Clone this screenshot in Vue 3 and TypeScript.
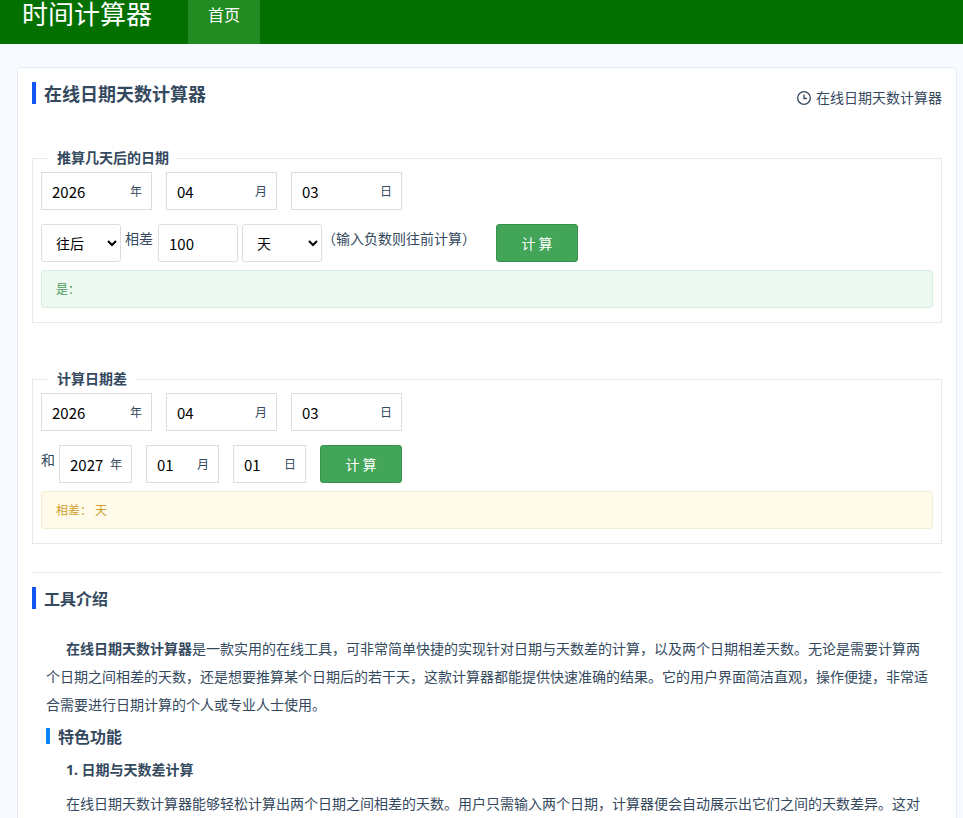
<script setup lang="ts">
import { reactive, ref } from 'vue'

interface DateParts {
  year: string
  month: string
  day: string
}

const DAY_MS = 86400000
const units: { key: keyof DateParts; label: string }[] = [
  { key: 'year', label: '年' },
  { key: 'month', label: '月' },
  { key: 'day', label: '日' },
]

const base = reactive<DateParts>({ year: '2026', month: '04', day: '03' })
const start = reactive<DateParts>({ year: '2026', month: '04', day: '03' })
const end = reactive<DateParts>({ year: '2027', month: '01', day: '01' })
const direction = ref('after')
const amount = ref('100')
const unit = ref('day')
const shifted = ref('')
const difference = ref('')

function toDate(parts: DateParts): Date {
  return new Date(Date.UTC(Number(parts.year), Number(parts.month) - 1, Number(parts.day)))
}

function shiftDate(): void {
  const date = toDate(base)
  const step = Number(amount.value) * (direction.value === 'after' ? 1 : -1)
  if (unit.value === 'day') date.setUTCDate(date.getUTCDate() + step)
  if (unit.value === 'week') date.setUTCDate(date.getUTCDate() + step * 7)
  if (unit.value === 'month') date.setUTCMonth(date.getUTCMonth() + step)
  shifted.value = `${date.getUTCFullYear()}年${date.getUTCMonth() + 1}月${date.getUTCDate()}日`
}

function compareDates(): void {
  const days = Math.round((toDate(end).getTime() - toDate(start).getTime()) / DAY_MS)
  difference.value = String(days)
}
</script>

<template>
  <div class="page">
    <header class="topbar">
      <a class="brand" href="#">时间计算器</a>
      <nav><a class="tab" href="#">首页</a></nav>
    </header>

    <main class="card">
      <div class="card-head">
        <h1 class="title">在线日期天数计算器</h1>
        <a class="crumb" href="#">
          <svg class="clock" viewBox="0 0 16 16" aria-hidden="true">
            <circle cx="8" cy="8" r="6.3" />
            <path d="M8 4.5V8.5H11" />
          </svg>
          <span>在线日期天数计算器</span>
        </a>
      </div>

      <form @submit.prevent="shiftDate">
        <fieldset class="panel">
          <legend>推算几天后的日期</legend>
          <div class="row spaced">
            <label v-for="u in units" :key="u.key" class="field">
              <input v-model="base[u.key]" type="text" />
              <span>{{ u.label }}</span>
            </label>
          </div>
          <div class="row tight">
            <select v-model="direction" class="box" aria-label="方向">
              <option value="after">往后</option>
              <option value="before">往前</option>
            </select>
            <label class="text" for="amount">相差</label>
            <input id="amount" v-model="amount" class="box" type="text" />
            <select v-model="unit" class="box" aria-label="单位">
              <option value="day">天</option>
              <option value="week">周</option>
              <option value="month">月</option>
            </select>
            <div class="hint">
              <span class="text">（输入负数则往前计算）</span>
              <button class="btn" type="submit">计 算</button>
            </div>
          </div>
          <output class="result success">是：{{ shifted }}</output>
        </fieldset>
      </form>

      <form @submit.prevent="compareDates">
        <fieldset class="panel">
          <legend>计算日期差</legend>
          <div class="row spaced">
            <label v-for="u in units" :key="u.key" class="field">
              <input v-model="start[u.key]" type="text" />
              <span>{{ u.label }}</span>
            </label>
          </div>
          <div class="row tight">
            <span class="text">和</span>
            <div class="row spaced">
              <label v-for="u in units" :key="u.key" class="field small">
                <input v-model="end[u.key]" type="text" />
                <span>{{ u.label }}</span>
              </label>
              <button class="btn" type="submit">计 算</button>
            </div>
          </div>
          <output class="result warning">相差：{{ difference }}&nbsp;天</output>
        </fieldset>
      </form>

      <section class="intro">
        <h2 class="title sub">工具介绍</h2>
        <article class="article">
          <p><strong>在线日期天数计算器</strong>是一款实用的在线工具，可非常简单快捷的实现针对日期与天数差的计算，以及两个日期相差天数。无论是需要计算两个日期之间相差的天数，还是想要推算某个日期后的若干天，这款计算器都能提供快速准确的结果。它的用户界面简洁直观，操作便捷，非常适合需要进行日期计算的个人或专业人士使用。</p>
          <h3>特色功能</h3>
          <h4>1. 日期与天数差计算</h4>
          <p>在线日期天数计算器能够轻松计算出两个日期之间相差的天数。用户只需输入两个日期，计算器便会自动展示出它们之间的天数差异。这对</p>
        </article>
      </section>
    </main>
  </div>
</template>

<style>
body {
  margin: 0;
  background: #f7faff;
}
</style>

<style scoped>
* {
  box-sizing: border-box;
}

.page {
  color: #34495e;
  font-family: "Noto Sans", "Noto Sans CJK SC", sans-serif;
  font-size: 14px;
  line-height: 28px;
}

h1, h2, h3, h4, p {
  margin: 0;
}

a {
  color: inherit;
  text-decoration: none;
}

.topbar {
  display: flex;
  gap: 36px;
  height: 44px;
  padding-left: 22px;
  background: #047000;
  color: #fff;
  line-height: 30px;
}

.brand {
  font-size: 26px;
  line-height: 28px;
}

.tab {
  display: block;
  height: 100%;
  padding: 0 20px;
  background: #228b22;
  font-size: 16px;
}

.card {
  margin: 23px 6px 0 17px;
  padding: 14px 14px 0;
  border: 1px solid #e6ebf2;
  border-bottom: 0;
  border-radius: 4px 4px 0 0;
  background: #fff;
}

.card-head {
  display: flex;
  justify-content: space-between;
  align-items: flex-start;
  height: 62px;
}

.title {
  padding: 2px 0 0 8px;
  border-left: 4px solid #1456f0;
  font-size: 18px;
  line-height: 20px;
}

.title.sub {
  font-size: 16px;
}

.crumb {
  display: flex;
  align-items: center;
  gap: 4px;
  line-height: 32px;
}

.clock {
  width: 16px;
  height: 16px;
  fill: none;
  stroke: #34495e;
  stroke-width: 1.3;
}

.panel {
  min-width: 0;
  margin: 0 0 42px;
  padding: 0 8px 14px;
  border: 1px solid #e6e8ea;
}

legend {
  margin-left: 8px;
  padding: 0 8px;
  font-weight: 700;
}

.row {
  display: flex;
  align-items: flex-start;
}

.spaced {
  gap: 14px;
}

.tight {
  gap: 4px;
}

.row + .row {
  margin-top: 14px;
}

.field {
  display: flex;
  align-items: center;
  width: 111px;
  height: 38px;
  padding: 0 9px 0 10px;
  border: 1px solid #ddd;
  background: #fff;
  font-size: 12px;
}

.field.small {
  width: 73px;
}

.field span {
  padding-top: 2px;
}

.field input {
  flex: 1;
  min-width: 0;
  padding: 0;
  border: 0;
  outline: 0;
  background: transparent;
  color: #000;
  font-family: "Noto Sans CJK SC", sans-serif;
  font-size: 15px;
}

.box {
  width: 80px;
  height: 38px;
  padding: 0 10px;
  border: 1px solid #ddd;
  border-radius: 3px;
  background: #fff;
  color: #000;
  font-family: "Noto Sans CJK SC", sans-serif;
  font-size: 15px;
}

select.box {
  font-size: 14px;
}

.text {
  line-height: 30px;
}

label.text {
  padding-right: 1px;
}

.hint {
  display: flex;
  gap: 20px;
  margin-left: -4px;
}

.btn {
  width: 82px;
  height: 38px;
  padding: 0;
  border: 1px solid #37904f;
  border-radius: 3px;
  background: #43a557;
  color: #fff;
  font-family: "Noto Sans CJK SC", sans-serif;
  font-size: 14px;
}

.result {
  display: block;
  height: 38px;
  margin-top: 8px;
  padding: 2px 14px 0;
  border: 1px solid;
  border-radius: 3px;
  font-size: 12px;
  line-height: 34px;
}

.success {
  border-color: #d8efdf;
  background: #eef9f1;
  color: #4c9a5c;
}

.warning {
  border-color: #f4edcf;
  background: #fffbeb;
  color: #cf9f2c;
}

.intro {
  margin-top: -14px;
  padding-top: 14px;
  border-top: 1px solid #e6e8ea;
}

.article {
  padding: 26px 14px 0;
}

.article p,
.article h4 {
  text-indent: 20px;
}

.article p strong {
  text-indent: 0;
}

.article h3 {
  margin: 9px 0 12px;
  padding: 2px 0 0 8px;
  border-left: 4px solid #0a84ff;
  font-size: 16px;
  line-height: 14px;
}

.article h4 {
  margin-bottom: 6px;
  font-size: 14px;
}
</style>
